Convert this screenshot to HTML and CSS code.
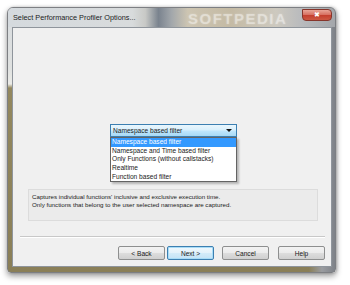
FILE: index.html
```html
<!DOCTYPE html>
<html>
<head>
<meta charset="utf-8">
<link rel="stylesheet" href="styles.css">
</head>
<body>
<div class="window">
  <div class="titlebar">
    <span class="title">Select Performance Profiler Options...</span>
    <span class="watermark">SOFTPEDIA</span>
    <span class="close">&#x2716;</span>
  </div>
  <div class="client">
    <div class="combo-wrap">
      <div class="combo">
        <span class="combo-text">Namespace based filter</span>
        <span class="arrow"></span>
      </div>
      <ul class="list">
        <li class="sel">Namespace based filter</li>
        <li>Namespace and Time based filter</li>
        <li>Only Functions (without callstacks)</li>
        <li>Realtime</li>
        <li>Function based filter</li>
      </ul>
    </div>
    <div class="info">
      <p>Captures individual functions' inclusive and exclusive execution time.</p>
      <p>Only functions that belong to the user selected namespace are captured.</p>
    </div>
    <div class="sep"></div>
    <div class="buttons">
      <button class="btn">&lt; Back</button>
      <button class="btn next">Next &gt;</button>
      <button class="btn cancel">Cancel</button>
      <button class="btn help">Help</button>
    </div>
  </div>
</div>
</body>
</html>
```
FILE: styles.css
```css
* { box-sizing: border-box; }
html, body { margin: 0; padding: 0; background: #ffffff; }
body {
  font-family: "Liberation Sans", Arial, sans-serif;
  font-size: 6.6px;
  color: #1a1a1a;
  width: 350px;
  height: 285px;
  overflow: hidden;
}
.window {
  margin: 7px 0 0 7px;
  width: 329px;
  height: 266px;
  border-radius: 6px 6px 4px 4px;
  border: 1px solid #7d7f83;
  background:
    linear-gradient(90deg, rgba(200,200,200,0) 0, rgba(200,200,200,0) 92%, #9a9ca0 96%, #7e8288 100%),
    linear-gradient(180deg, #d8dcdf 0, #dfe1e0 60px, #ebebe7 76px, #93885f 80px, #8a7f58 100%);
  box-shadow: 0 3px 6px rgba(0,0,0,0.4), 1px 0 3px rgba(0,0,0,0.2);
  padding: 0 3px 4px 4px;
  display: flex;
  flex-direction: column;
}
.titlebar {
  height: 19px;
  position: relative;
  display: flex;
  align-items: center;
  margin: 0 -3px 0 -4px;
  padding-left: 5px;
  border-radius: 5px 5px 0 0;
  background: linear-gradient(90deg, #d5dade 0, #d8dbdc 38%, #c8c9c6 42%, #7a838e 46%, #a2a7ab 50%, #cdc5b2 55%, #c4baa4 68%, #cdc9bf 82%, #b8babd 90%, #a4a7ab 100%);
}
.title {
  font-size: 7.3px;
  color: #1c1c1c;
  position: relative;
  z-index: 1;
}
.watermark {
  position: absolute;
  left: 180px;
  top: 2px;
  font-size: 15px;
  font-weight: bold;
  letter-spacing: 1.5px;
  color: rgba(255,255,255,0.35);
  text-shadow: 0 0 2px rgba(255,255,255,0.3);
}
.close {
  position: absolute;
  right: 3px;
  top: 1px;
  width: 30px;
  height: 12px;
  border: 1px solid #86352b;
  border-radius: 0 4px 4px 4px;
  background: linear-gradient(180deg, #e8a597 0, #d87364 45%, #c4402f 55%, #cc5842 100%);
  color: #ffffff;
  font-size: 7px;
  display: flex;
  align-items: center;
  justify-content: center;
}
.client {
  height: 240px;
  background: #f0f0f0;
  border: 1px solid #8f959c;
  position: relative;
  padding-top: 96px;
}
.combo-wrap {
  position: relative;
  margin-left: 97px;
  width: 127px;
  height: 13px;
}
.combo {
  height: 13px;
  border: 1px solid #3c7fb1;
  background: linear-gradient(180deg, #eaf6fd 0, #d9f0fc 45%, #bee6fd 55%, #a7d9f5 100%);
  display: flex;
  align-items: center;
  padding-left: 2px;
  padding-right: 4px;
}
.combo-text {
  flex: 1;
  font-size: 6.6px;
}
.arrow {
  width: 0;
  height: 0;
  border-left: 3px solid transparent;
  border-right: 3px solid transparent;
  border-top: 3px solid #111;
}
.list {
  position: absolute;
  left: 0;
  top: 13px;
  width: 127px;
  margin: 0;
  padding: 0;
  list-style: none;
  background: #ffffff;
  border: 1px solid #646464;
  box-shadow: 2px 2px 2px rgba(0,0,0,0.25);
  z-index: 2;
}
.list li {
  height: 8.7px;
  line-height: 8.7px;
  padding-left: 1px;
  font-size: 6.6px;
  white-space: nowrap;
}
.list li.sel {
  background: #3399ff;
  color: #ffffff;
}
.info {
  margin: 52px 0 0 15px;
  width: 290px;
  height: 32px;
  border: 1px solid #dcdcdc;
  background: #ebebeb;
  padding: 3px 0 0 3px;
}
.info p {
  margin: 0;
  line-height: 8.2px;
  font-size: 6.2px;
}
.sep {
  margin: 15px 0 0 7px;
  width: 305px;
  height: 2px;
  border-top: 1px solid #c8c8c8;
  border-bottom: 1px solid #ffffff;
}
.buttons {
  display: flex;
  justify-content: flex-end;
  margin-top: 8px;
  padding-right: 6px;
}
.btn {
  width: 47px;
  height: 14px;
  padding: 0;
  font-family: "Liberation Sans", Arial, sans-serif;
  font-size: 6.6px;
  color: #1a1a1a;
  border: 1px solid #8e8f8f;
  border-radius: 2px;
  background: linear-gradient(180deg, #f3f3f3 0, #ebebeb 48%, #dddddd 52%, #cfcfcf 100%);
}
.btn.next {
  margin-left: 2px;
  border-color: #3c7fb1;
  box-shadow: inset 0 0 0 1px #a8dcf7;
  background: linear-gradient(180deg, #f0f8fd 0, #e3f2fb 48%, #d3ebf9 52%, #c4e3f6 100%);
}
.btn.cancel { margin-left: 8px; }
.btn.help { margin-left: 9px; }
```
